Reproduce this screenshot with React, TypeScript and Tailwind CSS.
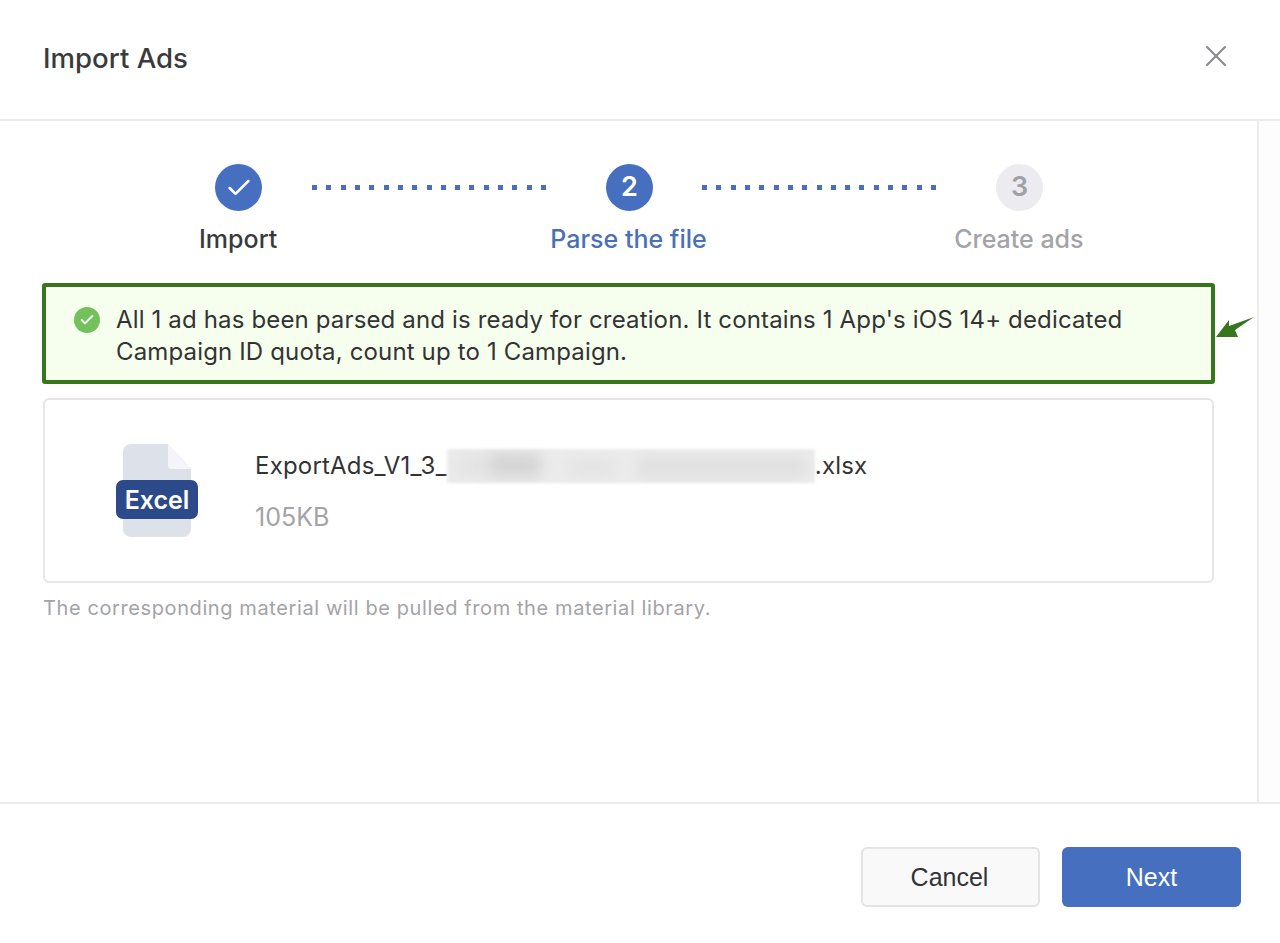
import { Check, X } from 'lucide-react'

const SANS = "font-['Inter','Noto_Sans',sans-serif]"

// ---------------------------------------------------------------------------
// Stepper
// ---------------------------------------------------------------------------

function Dots() {
  return (
    <div className="flex w-[234px] justify-between">
      {Array.from({ length: 17 }).map((_, i) => (
        <div key={i} className="h-[5px] w-[5px] bg-[#4a70bb]" />
      ))}
    </div>
  )
}

function Stepper() {
  return (
    <div>
      <div className="flex h-[47px] items-center pl-[172px]">
        <div className="flex h-[47px] w-[47px] items-center justify-center rounded-full bg-[#4670bf]">
          <Check className="h-[28px] w-[28px] text-white" strokeWidth={2.2} />
        </div>
        <div className="ml-[50px] mr-[60px]">
          <Dots />
        </div>
        <div className="flex h-[47px] w-[47px] items-center justify-center rounded-full bg-[#4670bf] text-[27px] font-semibold text-white">
          2
        </div>
        <div className="ml-[49px] mr-[60px]">
          <Dots />
        </div>
        <div className="flex h-[47px] w-[47px] items-center justify-center rounded-full bg-[#ebebf0] text-[27px] font-semibold text-[#a0a0a5]">
          3
        </div>
      </div>
      <div className="mt-[10px] grid grid-cols-3 text-center text-[25px] font-medium leading-[36px]">
        <div className="text-[#3a3a3c]">Import</div>
        <div className="text-[#4a70b8]">Parse the file</div>
        <div className="text-[#a3a3a8]">Create ads</div>
      </div>
    </div>
  )
}

// ---------------------------------------------------------------------------
// Excel file icon
// ---------------------------------------------------------------------------

function ExcelIcon() {
  return (
    <div className="relative h-[93px] w-[82px] shrink-0">
      <svg className="absolute left-[7px] top-0" width="68" height="93" viewBox="0 0 68 93">
        <path d="M8 0H45L68 25V85a8 8 0 0 1-8 8H8a8 8 0 0 1-8-8V8a8 8 0 0 1 8-8Z" fill="#dde1e9" />
        <path d="M45 0L68 25H49a4 4 0 0 1-4-4Z" fill="#f3f5f8" />
      </svg>
      <div className="absolute left-0 top-[36px] flex h-[39px] w-[82px] items-center justify-center rounded-[7px] bg-[#2c4a8a] pt-[2px] text-[25px] font-semibold text-white">
        Excel
      </div>
    </div>
  )
}

// ---------------------------------------------------------------------------
// Page
// ---------------------------------------------------------------------------

export default function App() {
  return (
    <div className={`flex h-[943px] w-[1280px] flex-col overflow-hidden bg-white ${SANS}`}>
      {/* Header */}
      <header className="flex h-[121px] shrink-0 items-start justify-between border-b-2 border-[#ececee] pl-[43px] pr-[46px]">
        <h1 className="mt-[38px] text-[27.6px] font-medium leading-[40px] text-[#3a3a3c]">Import Ads</h1>
        <X className="mt-[38px] h-[36px] w-[36px] text-[#8a8a8e]" strokeWidth={1.4} />
      </header>

      {/* Body */}
      <div className="flex min-h-0 flex-1">
        <main className="w-[1257px] shrink-0 pl-[43px] pr-[43px] pt-[43px]">
          <Stepper />

          <div className="relative -mx-px mt-[26px] flex h-[101px] items-start gap-[16px] rounded-[3px] border-[4px] border-[#38761d] bg-[#f6ffed] pl-[28px] pr-[60px] pt-[17px]">
            <div className="mt-[3px] flex h-[26px] w-[26px] shrink-0 items-center justify-center rounded-full bg-[#72c15a]">
              <Check className="h-[16px] w-[16px] text-white" strokeWidth={3} />
            </div>
            <p className="text-[24px] leading-[32px] tracking-[0.15px] text-[#333336]">
              All 1 ad has been parsed and is ready for creation. It contains 1 App's iOS 14+ dedicated Campaign ID
              quota, count up to 1 Campaign.
            </p>
            {/* annotation arrow */}
            <svg className="absolute left-[1170px] top-[28px]" width="40" height="24" viewBox="0 0 40 24">
              <path d="M0 22L13 5L13 11L38 2L19 15L22 22Z" fill="#38761d" />
            </svg>
          </div>

          <div className="mt-[14px] flex h-[185px] items-center rounded-[6px] border-2 border-[#e6e6ea] pl-[71px]">
            <ExcelIcon />
            <div className="ml-[57px] pt-[3px]">
              <div className="flex h-[34px] items-center text-[24px] tracking-[0.2px] text-[#333336]">
                <span>ExportAds_V1_3_</span>
                <div className="relative h-[34px] w-[368px] overflow-hidden bg-[#ececec] blur-[1.5px]">
                  <div className="absolute left-[8px] top-[4px] h-[26px] w-[34px] bg-[#e4e4e4] blur-[7px]" />
                  <div className="absolute left-[42px] top-[4px] h-[24px] w-[52px] bg-[#d4d4d4] blur-[7px]" />
                  <div className="absolute left-[120px] top-[8px] h-[20px] w-[50px] bg-[#e4e4e4] blur-[7px]" />
                  <div className="absolute left-[190px] top-[8px] h-[20px] w-[170px] bg-[#dfdfdf] blur-[7px]" />
                </div>
                <span>.xlsx</span>
              </div>
              <div className="mt-[16px] text-[25px] leading-[36px] text-[#a3a3a8]">105KB</div>
            </div>
          </div>

          <p className="mt-[10px] text-[20px] leading-[30px] tracking-[0.6px] text-[#a3a3a8]">
            The corresponding material will be pulled from the material library.
          </p>
        </main>
        {/* Scrollbar track */}
        <div className="flex-1 border-l-2 border-[#ececee] bg-[#fdfdfd]" />
      </div>

      {/* Footer */}
      <footer className="flex h-[141px] shrink-0 items-start justify-end gap-[22px] border-t-2 border-[#ececee] pr-[39px] pt-[43px] font-['Liberation_Sans',Arial,sans-serif]">
        <button className="h-[60px] w-[179px] rounded-[6px] border-2 border-[#e3e3e5] bg-[#f9f9f9] pr-[2px] pt-[2px] text-[25px] text-[#333336]">
          Cancel
        </button>
        <button className="h-[60px] w-[179px] rounded-[6px] bg-[#4670bf] pt-[2px] text-[25px] text-white">Next</button>
      </footer>
    </div>
  )
}
